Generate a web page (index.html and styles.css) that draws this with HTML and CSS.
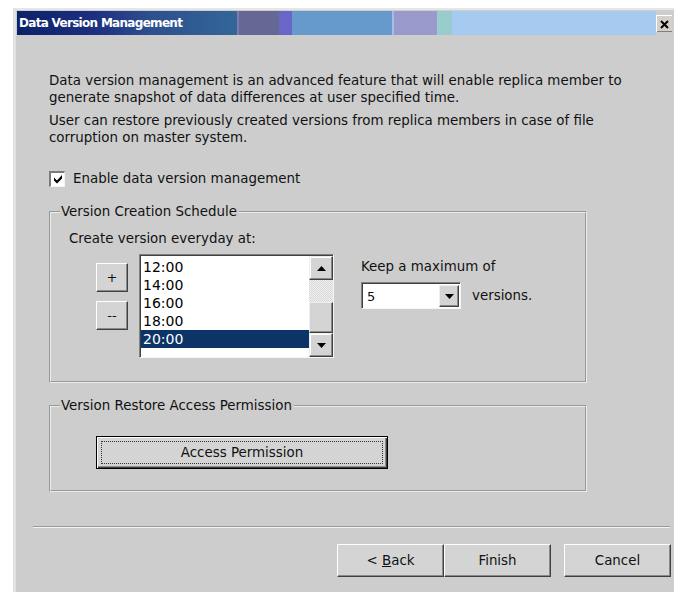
FILE: index.html
```html
<!DOCTYPE html>
<html lang="en">
<head>
<meta charset="utf-8">
<title>Data Version Management</title>
<link rel="stylesheet" href="styles.css">
</head>
<body>
<div class="dialog">
  <div class="titlebar">
    <div class="band band-main"><span class="title">Data Version Management</span></div>
    <div class="band band-dusk"></div>
    <div class="band band-violet"></div>
    <div class="band band-sky"></div>
    <div class="band band-lilac"></div>
    <div class="band band-teal"></div>
    <div class="band band-pale"></div>
    <div class="close-btn">
      <svg width="9" height="9" viewBox="0 0 9 9"><path d="M1 1 L8 8 M8 1 L1 8" stroke="#000" stroke-width="2"/></svg>
    </div>
  </div>

  <div class="pane">
    <p class="intro">Data version management is an advanced feature that will enable replica member to<br>generate snapshot of data differences at user specified time.</p>
    <p class="intro">User can restore previously created versions from replica members in case of file<br>corruption on master system.</p>

    <label class="check-row">
      <span class="check-box">
        <svg width="10" height="10" viewBox="0 0 10 10"><path d="M1 3.5 L4 6.5 L9 1 L9 4.5 L4 9.5 L1 6.5 Z" fill="#000"/></svg>
      </span>
      <span>Enable data version management</span>
    </label>

    <fieldset class="group group-schedule">
      <legend>Version Creation Schedule</legend>
      <div class="caption">Create version everyday at:</div>
      <div class="schedule-row">
        <div class="step-col">
          <div class="btn btn-step">+</div>
          <div class="btn btn-step">--</div>
        </div>
        <div class="listbox">
          <ul class="times">
            <li>12:00</li>
            <li>14:00</li>
            <li>16:00</li>
            <li>18:00</li>
            <li class="selected">20:00</li>
          </ul>
          <div class="vscroll">
            <div class="sb-btn"><svg width="9" height="5" viewBox="0 0 9 5"><path d="M4.5 0 L9 5 L0 5 Z" fill="#000"/></svg></div>
            <div class="sb-track"></div>
            <div class="sb-thumb"></div>
            <div class="sb-btn"><svg width="9" height="5" viewBox="0 0 9 5"><path d="M0 0 L9 0 L4.5 5 Z" fill="#000"/></svg></div>
          </div>
        </div>
        <div class="keep-col">
          <div class="keep-label">Keep a maximum of</div>
          <div class="keep-row">
            <div class="combo">
              <span class="combo-value">5</span>
              <span class="combo-drop"><svg width="9" height="5" viewBox="0 0 9 5"><path d="M0 0 L9 0 L4.5 5 Z" fill="#000"/></svg></span>
            </div>
            <span>versions.</span>
          </div>
        </div>
      </div>
    </fieldset>

    <fieldset class="group group-restore">
      <legend>Version Restore Access Permission</legend>
      <div class="btn btn-default"><span class="focus-ring">Access Permission</span></div>
    </fieldset>

    <div class="separator"></div>

    <div class="footer">
      <div class="btn btn-nav"><span>&lt; <u>B</u>ack</span></div>
      <div class="btn btn-nav">Finish</div>
      <div class="btn btn-nav btn-cancel">Cancel</div>
    </div>
  </div>
</div>
</body>
</html>
```

FILE: styles.css
```css
html, body {
  margin: 0;
  padding: 0;
  background: #ffffff;
  overflow: hidden;
}

body {
  width: 674px;
  height: 592px;
  font-family: "DejaVu Sans", Verdana, sans-serif;
  font-size: 13.4px;
  color: #111;
}

.dialog {
  box-sizing: border-box;
  margin: 8px 0 0 13px;
  width: 664px;
  height: 600px;
  background: #cdcdcd;
  border-top: 2px solid #e6e6e6;
  border-left: 3px solid #e2e2e2;
  padding: 1px 0 0 1px;
}

/* title bar: solid colour bands, the first carries a gradient */
.titlebar {
  display: flex;
  height: 24px;
  align-items: stretch;
}

.band { flex: none; }

.band-main {
  width: 220px;
  display: flex;
  align-items: center;
  background: linear-gradient(90deg, #0b2268 0%, #1d2f80 35%, #2d4f8e 60%, #336699 100%);
}

.title {
  padding-left: 2px;
  color: #fff;
  font-weight: bold;
  font-size: 12px;
  letter-spacing: -0.7px;
}

.band-dusk { width: 40px; background: #656794; border-left: 2px solid #7c7ca8; }
.band-violet { width: 13px; background: #6a66c8; }
.band-sky { width: 100px; background: #6699cc; }
.band-lilac { width: 43px; background: #9999cc; border-left: 2px solid #a8bce0; }
.band-teal { width: 15px; background: #99cccc; }
.band-pale { width: 204px; background: #a6caf0; }

.close-btn {
  flex: none;
  box-sizing: border-box;
  width: 16px;
  margin: 4px 0 3px;
  background: #d4d0c8;
  border-top: 1px solid #fff;
  border-left: 1px solid #fff;
  box-shadow: inset 0 -1px #808080;
  display: flex;
  align-items: center;
  justify-content: center;
}

.pane {
  padding: 37px 0 0 32px;
}

.intro {
  margin: 0 0 6px;
  line-height: 17px;
}

.check-row {
  display: flex;
  align-items: center;
  gap: 8px;
  margin-top: 24px;
  height: 17px;
}

.check-box {
  box-sizing: border-box;
  width: 16px;
  height: 16px;
  background: #fff;
  border-top: 2px solid #7a7a7a;
  border-left: 2px solid #7a7a7a;
  border-right: 1px solid #f4f4f4;
  border-bottom: 1px solid #f4f4f4;
  display: flex;
  align-items: center;
  justify-content: center;
}

/* etched group boxes */
.group {
  box-sizing: border-box;
  width: 538px;
  margin: 0;
  border: 2px groove #ececec;
  padding: 0 0 0 18px;
}

.group legend {
  padding: 0 2px 0 1px;
  margin-left: -9px;
  line-height: 15px;
}

.group-schedule {
  margin-top: 17px;
  padding-bottom: 23px;
}

.caption {
  margin-top: 12px;
  line-height: 15px;
}

.schedule-row {
  display: flex;
  align-items: flex-start;
  margin-top: 8px;
}

.step-col {
  display: flex;
  flex-direction: column;
  gap: 9px;
  margin: 9px 11px 0 27px;
}

.btn {
  box-sizing: border-box;
  background: #d4d4d4;
  border-top: 1px solid #fff;
  border-left: 1px solid #fff;
  border-right: 1px solid #404040;
  border-bottom: 1px solid #404040;
  box-shadow: inset -1px -1px #8a8a8a;
  display: flex;
  align-items: center;
  justify-content: center;
}

.btn-step {
  width: 32px;
  height: 29px;
  font-size: 13px;
}

.listbox {
  box-sizing: border-box;
  width: 195px;
  height: 104px;
  background: #fff;
  border-top: 1px solid #808080;
  border-left: 1px solid #808080;
  border-right: 1px solid #f6f6f6;
  border-bottom: 1px solid #f6f6f6;
  box-shadow: inset 1px 1px #404040;
  display: flex;
  padding: 1px 0 0 1px;
}

.times {
  list-style: none;
  margin: 0;
  padding: 2px 0 0;
  flex: 1;
  font-size: 14px;
  color: #000;
}

.times li {
  height: 18px;
  line-height: 18px;
  padding-left: 2px;
}

.times li.selected {
  background: #0c3467;
  color: #fff;
}

.vscroll {
  width: 24px;
  display: flex;
  flex-direction: column;
}

.sb-btn {
  box-sizing: border-box;
  height: 24px;
  background: #d4d4d4;
  border-top: 1px solid #eee;
  border-left: 1px solid #eee;
  border-right: 1px solid #404040;
  border-bottom: 1px solid #404040;
  box-shadow: inset -1px -1px #8a8a8a, inset 1px 1px #fff;
  display: flex;
  align-items: center;
  justify-content: center;
}

.sb-track {
  height: 22px;
  background-color: #e8e8e8;
  background-image: repeating-conic-gradient(#d8d8d8 0 25%, #f0f0f0 0 50%);
  background-size: 2px 2px;
}

.sb-thumb {
  box-sizing: border-box;
  height: 31px;
  background: #d4d4d4;
  border-top: 1px solid #eee;
  border-left: 1px solid #eee;
  border-right: 1px solid #404040;
  border-bottom: 1px solid #404040;
  box-shadow: inset -1px -1px #8a8a8a;
}

.keep-col {
  margin-left: 27px;
  padding-top: 5px;
}

.keep-label {
  line-height: 15px;
}

.keep-row {
  display: flex;
  align-items: center;
  gap: 11px;
  margin-top: 8px;
}

.combo {
  box-sizing: border-box;
  width: 100px;
  height: 27px;
  background: #fff;
  border-top: 1px solid #808080;
  border-left: 1px solid #808080;
  border-right: 1px solid #f6f6f6;
  border-bottom: 1px solid #f6f6f6;
  box-shadow: inset 1px 1px #404040;
  display: flex;
  align-items: stretch;
  padding: 2px 1px 1px 2px;
}

.combo-value {
  flex: 1;
  display: flex;
  align-items: center;
  padding-left: 3px;
  font-size: 13px;
}

.combo-drop {
  box-sizing: border-box;
  width: 20px;
  background: #d4d4d4;
  border-top: 1px solid #eee;
  border-left: 1px solid #eee;
  border-right: 1px solid #404040;
  border-bottom: 1px solid #404040;
  box-shadow: inset -1px -1px #8a8a8a;
  display: flex;
  align-items: center;
  justify-content: center;
}

.group-restore {
  margin-top: 15px;
  padding-top: 23px;
  padding-bottom: 21px;
}

.btn-default {
  margin-left: 27px;
  width: 292px;
  height: 33px;
  border: 1px solid #000;
  box-shadow: inset 1px 1px #fff, inset -1px -1px #404040, inset -2px -2px #8a8a8a;
  padding: 4px;
}

.focus-ring {
  box-sizing: border-box;
  width: 100%;
  height: 100%;
  border: 1px dotted #333;
  display: flex;
  align-items: center;
  justify-content: center;
}

.separator {
  margin: 34px 7px 0 -16px;
  height: 0;
  border-top: 1px solid #9a9a9a;
  border-bottom: 1px solid #f2f2f2;
}

.footer {
  display: flex;
  justify-content: flex-end;
  margin: 16px 6px 0 0;
}

.btn-nav {
  width: 107px;
  height: 33px;
}

.btn-cancel {
  margin-left: 13px;
}

u { text-decoration: underline; }
```
